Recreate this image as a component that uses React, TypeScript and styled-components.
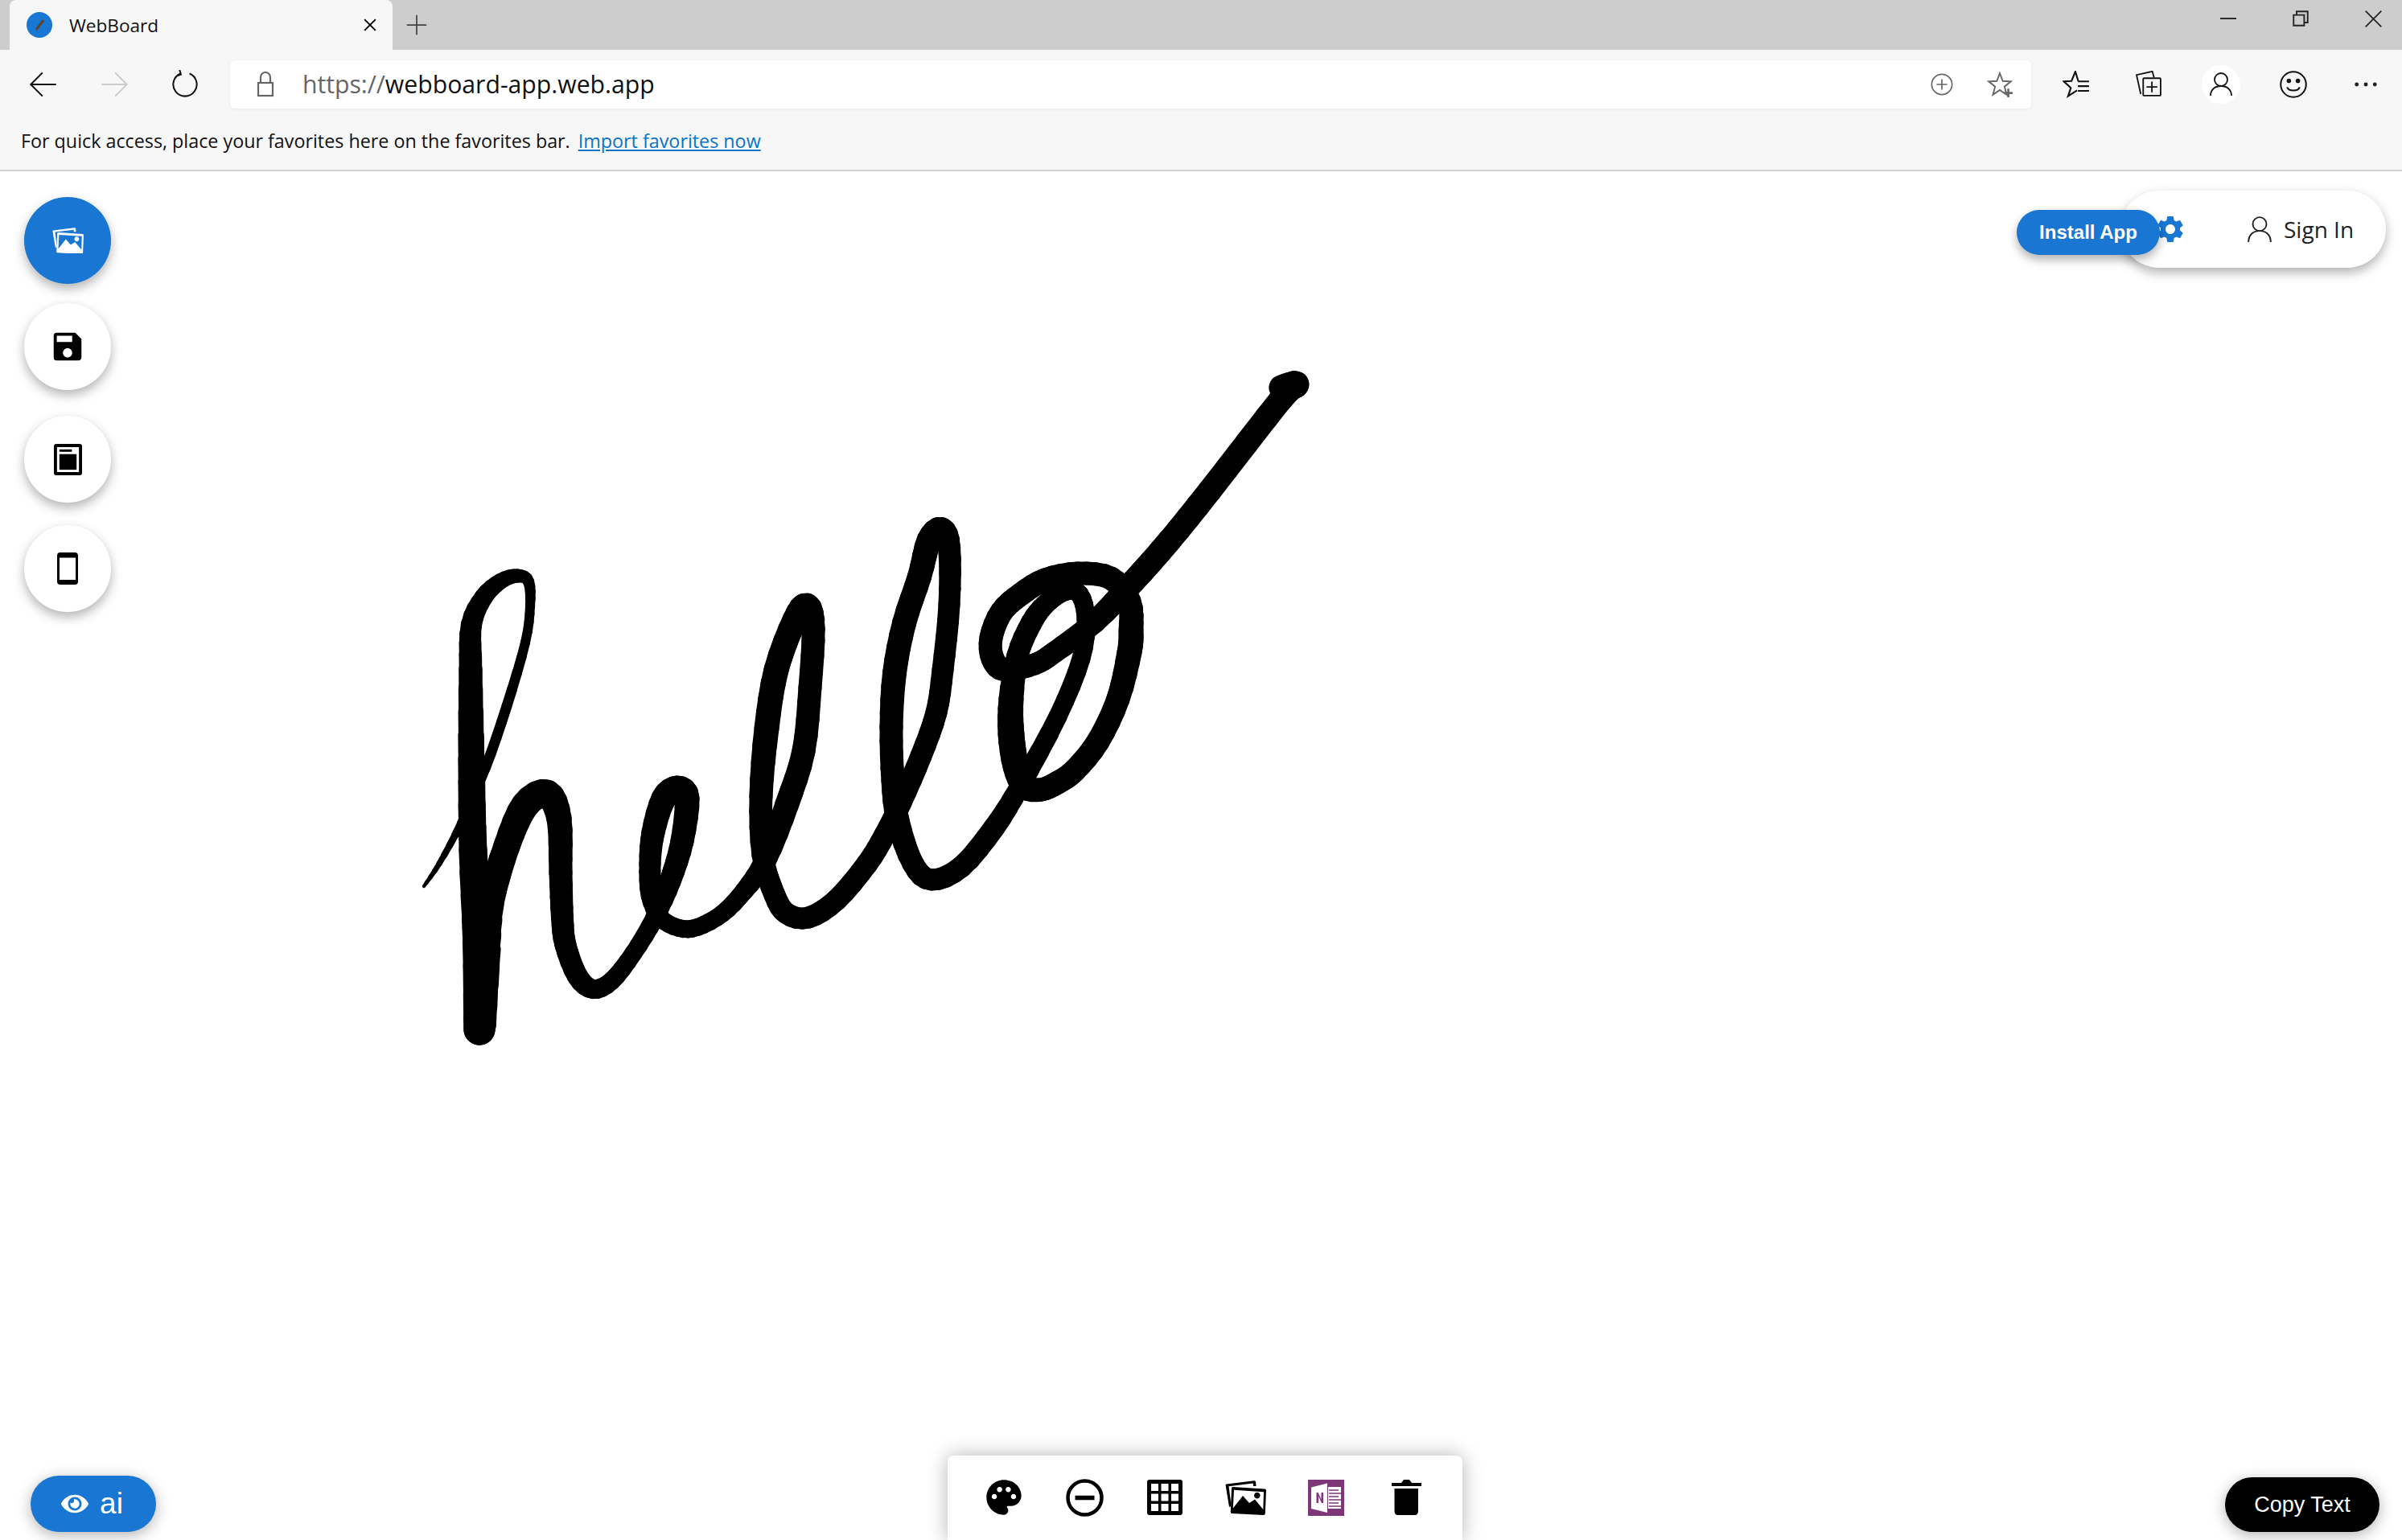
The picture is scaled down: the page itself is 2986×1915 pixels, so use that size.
import { createGlobalStyle, styled } from 'styled-components'
import { MdPalette, MdSave } from 'react-icons/md'
import { FaEye } from 'react-icons/fa'

type Pt = [number, number, number]

// hand trace of the "hello" stroke: x, y, pen width
const trace: Pt[] = [
  [527, 1102, 4], [546, 1074, 7], [573, 1024, 10], [603, 956, 13], [630, 878, 13], [653, 799, 12], [659, 754, 12],
  [657, 723, 14], [643, 716, 17], [622, 723, 20], [601, 743, 23], [586, 777, 26], [585, 833, 29], [586, 945, 33],
  [588, 1057, 35], [594, 1170, 38], [596, 1280, 39], [600, 1200, 43], [609, 1125, 34], [630, 1052, 33], [653, 1001, 35],
  [680, 987, 35], [695, 1018, 31], [697, 1085, 29], [699, 1141, 28], [703, 1175, 27], [718, 1214, 26], [737, 1230, 24],
  [760, 1220, 23], [787, 1186, 22], [814, 1141, 23], [833, 1096, 27], [848, 1046, 29], [854, 993, 31], [842, 981, 33],
  [825, 993, 31], [812, 1035, 29], [808, 1074, 27], [810, 1113, 27], [821, 1141, 22], [844, 1154, 22], [867, 1153, 22],
  [898, 1136, 22], [925, 1108, 23], [952, 1069, 27], [978, 1001, 30], [999, 934, 29], [1007, 855, 29], [1011, 782, 29],
  [1003, 754, 33], [988, 771, 31], [965, 833, 31], [953, 906, 31], [946, 990, 29], [948, 1063, 27], [963, 1113, 27],
  [978, 1136, 27], [1005, 1141, 27], [1040, 1119, 27], [1078, 1074, 27], [1100, 1038, 27], [1120, 998, 27], [1145, 940, 27],
  [1164, 886, 27], [1172, 833, 27], [1180, 752, 27], [1180, 681, 28], [1170, 659, 32], [1155, 672, 31], [1143, 717, 30],
  [1124, 775, 30], [1112, 837, 30], [1108, 904, 29], [1110, 971, 29], [1116, 1020, 29], [1135, 1074, 27], [1158, 1094, 27],
  [1195, 1078, 27], [1236, 1029, 27], [1269, 976, 25], [1315, 891, 23], [1344, 819, 23], [1350, 770, 23], [1342, 739, 23],
  [1323, 735, 25], [1299, 752, 25], [1282, 775, 27], [1265, 815, 27], [1257, 869, 31], [1257, 913, 33], [1263, 953, 33],
  [1274, 978, 31], [1294, 982, 29], [1315, 973, 29], [1336, 958, 29], [1365, 922, 29], [1390, 869, 29], [1404, 811, 31],
  [1406, 784, 31], [1404, 748, 29], [1381, 719, 29], [1340, 713, 29], [1299, 721, 29], [1269, 739, 29], [1245, 761, 29],
  [1232, 793, 29], [1234, 819, 29], [1249, 833, 29], [1286, 826, 27], [1311, 811, 27], [1361, 773, 28], [1409, 723, 30],
  [1454, 672, 30], [1504, 610, 30], [1592, 497, 30], [1611, 478, 33], [1593, 482, 31],
]

// catmull-rom between the traced points so the pen line doesn't look like a polygon
const smooth = (pts: Pt[], steps = 4): Pt[] => {
  const out: Pt[] = [pts[0]]
  for (let i = 0; i < pts.length - 1; i++) {
    const a = pts[Math.max(i - 1, 0)]
    const b = pts[i]
    const c = pts[i + 1]
    const d = pts[Math.min(i + 2, pts.length - 1)]
    for (let s = 1; s <= steps; s++) {
      const t = s / steps
      const at = (k: 0 | 1) =>
        0.5 *
        (2 * b[k] +
          (c[k] - a[k]) * t +
          (2 * a[k] - 5 * b[k] + 4 * c[k] - d[k]) * t * t +
          (3 * b[k] - a[k] - 3 * c[k] + d[k]) * t * t * t)
      out.push([at(0), at(1), b[2] + (c[2] - b[2]) * t])
    }
  }
  return out
}

const stroke = smooth(trace)

const GlobalStyle = createGlobalStyle`
  html, body {
    margin: 0;
    padding: 0;
    background: #fff;
    font-family: 'Open Sans', 'Liberation Sans', sans-serif;
  }
`

const Page = styled.div`
  width: 2986px;
  height: 1915px;
  display: flex;
  flex-direction: column;
  overflow: hidden;
`

const TabStrip = styled.div`
  height: 62px;
  background: #cdcdcd;
  display: flex;
  align-items: stretch;
  padding-left: 12px;
`

const Tab = styled.div`
  width: 476px;
  background: #f7f7f7;
  border-radius: 8px 8px 0 0;
  display: flex;
  align-items: center;
  padding: 0 18px 0 21px;
  box-sizing: border-box;
  font-size: 22.6px;
  color: #111;
`

const Favicon = styled.svg`
  width: 32px;
  height: 32px;
  margin-right: 21px;
`

const TabTitle = styled.span`
  flex: 1;
`

const NewTab = styled.div`
  width: 60px;
  display: flex;
  align-items: center;
  justify-content: center;
`

const WindowButtons = styled.div`
  margin-left: auto;
  display: flex;
  align-items: center;
  padding-right: 25px;
  gap: 70px;
  margin-top: -16px;
`

const NavBar = styled.div`
  height: 88px;
  background: #f7f7f7;
  display: flex;
  align-items: center;
  box-sizing: border-box;
  padding: 0 0 3px 36px;
`

const NavIcons = styled.div`
  display: flex;
  align-items: center;
  gap: 52px;
  width: 250px;
`

const AddressBar = styled.div`
  width: 2240px;
  height: 60px;
  background: #fff;
  border-radius: 6px;
  box-shadow: 0 1px 4px rgba(0, 0, 0, 0.06);
  display: flex;
  align-items: center;
  padding: 0 22px 0 28px;
  box-sizing: border-box;
  font-size: 30.2px;
  color: #111;
`

const Scheme = styled.span`
  color: #666;
`

const Url = styled.div`
  flex: 1;
  margin-left: 30px;
`

const AddressTools = styled.div`
  display: flex;
  align-items: center;
  gap: 40px;
`

const ToolIcons = styled.div`
  flex: 1;
  display: flex;
  align-items: center;
  padding-left: 11px;
`

const ToolCell = styled.div`
  width: 90px;
  display: flex;
  align-items: center;
  justify-content: center;
`

const ProfileBadge = styled.div`
  width: 48px;
  height: 48px;
  border-radius: 50%;
  background: #fff;
  display: flex;
  align-items: center;
  justify-content: center;
`

const FavBar = styled.div`
  height: 49px;
  background: #f7f7f7;
  border-bottom: 2px solid #d2d2d2;
  display: flex;
  align-items: center;
  gap: 10px;
  padding: 0 0 12px 26px;
  font-size: 23.3px;
  color: #111;
`

const FavLink = styled.a`
  color: #0a74c9;
  text-decoration: underline;
`

const Canvas = styled.main`
  position: relative;
  flex: 1;
  background: #fff;
`

const Drawing = styled.svg`
  position: absolute;
  left: 0;
  top: 0;
  width: 2986px;
  height: 1702px;
`

const FabColumn = styled.div`
  position: absolute;
  left: 30px;
  top: 32px;
  display: flex;
  flex-direction: column;
`

const Fab = styled.button<{ $active?: boolean; $top?: number }>`
  width: 108px;
  height: 108px;
  border: 0;
  padding: 0;
  margin-top: ${(p) => p.$top ?? 0}px;
  border-radius: 50%;
  background: ${(p) => (p.$active ? '#1976d2' : '#fff')};
  color: ${(p) => (p.$active ? '#fff' : '#000')};
  box-shadow: 0 6px 14px rgba(0, 0, 0, 0.3);
  display: flex;
  align-items: center;
  justify-content: center;
`

const AccountPill = styled.div`
  position: absolute;
  left: 2636px;
  top: 24px;
  width: 330px;
  height: 96px;
  border-radius: 48px;
  background: #fff;
  box-shadow: 0 6px 14px rgba(0, 0, 0, 0.3);
  display: flex;
  align-items: center;
  box-sizing: border-box;
  padding-left: 42px;
  font-size: 28px;
  color: #222;
`

const SignIn = styled.div`
  display: flex;
  align-items: center;
  gap: 13px;
  margin-left: 74px;
`

const InstallButton = styled.button`
  position: absolute;
  left: 2507px;
  top: 48px;
  width: 178px;
  height: 56px;
  border: 0;
  border-radius: 28px;
  background: #1976d2;
  color: #fff;
  font-family: 'Liberation Sans', sans-serif;
  font-weight: 700;
  font-size: 24px;
  box-shadow: 0 6px 12px rgba(0, 0, 0, 0.3);
`

const AiButton = styled.button`
  position: absolute;
  left: 38px;
  bottom: 10px;
  width: 156px;
  height: 70px;
  border: 0;
  border-radius: 35px;
  background: #1976d2;
  color: #fff;
  font-family: 'Liberation Sans', sans-serif;
  font-size: 37px;
  display: flex;
  align-items: center;
  justify-content: center;
  gap: 14px;
  padding: 0 3px 0 0;
  box-shadow: 0 4px 18px rgba(0, 0, 0, 0.3);
`

const CopyButton = styled.button`
  position: absolute;
  left: 2766px;
  bottom: 10px;
  width: 192px;
  height: 68px;
  border: 0;
  border-radius: 34px;
  background: #000;
  color: #fff;
  font-family: 'Liberation Sans', sans-serif;
  font-size: 27px;
  box-shadow: 0 4px 18px rgba(0, 0, 0, 0.3);
`

const BottomBar = styled.div`
  position: absolute;
  left: 1178px;
  bottom: 0;
  width: 640px;
  height: 105px;
  background: #fff;
  border-radius: 8px 8px 0 0;
  box-shadow: 0 0 24px rgba(0, 0, 0, 0.3);
  display: flex;
  align-items: flex-start;
  box-sizing: border-box;
  padding: 27px 0 0 20px;
`

const BarIcon = styled.div`
  width: 100px;
  height: 50px;
  display: flex;
  align-items: center;
  justify-content: center;
`

const LineIcon = ({ size = 34, color = '#111', children }: { size?: number; color?: string; children: React.ReactNode }) => (
  <svg width={size} height={size} viewBox="0 0 32 32" fill="none" stroke={color} strokeWidth="1.8">
    {children}
  </svg>
)

const Photos = ({ size, color }: { size: number; color: string }) => (
  <svg width={size} height={(size * 43) / 51} viewBox="0 0 51 43" fill={color} fillRule="evenodd">
    <path d="M1.5 4.5 L36 .3 Q38 .2 38.2 2 L38.5 7 L35 7 L34.8 3.6 L4.5 7.2 L7.5 30 L6.2 33 Q5 33 4.8 31.5 L.6 6 Q.4 4.7 1.5 4.5Z" />
    <path d="M9.5 8 L49 10.5 Q51 10.7 51 12.5 L49.8 41 Q49.7 43 47.5 43 L8.5 41 Q6.8 41 6.8 39 L8 9.8 Q8.2 8 9.5 8Z M11 11.8 L9.8 34.5 L22 19 L30 28 L37 23.5 L47.3 36 L48 14.2Z M39.8 14.8 a3.8 3.8 0 1 0 .01 0Z" />
  </svg>
)

const NewspaperIcon = () => (
  <svg width="35" height="39" viewBox="0 0 36 40" fill="#000" fillRule="evenodd">
    <path d="M3 0 H33 Q36 0 36 3 V37 Q36 40 33 40 H3 Q0 40 0 37 V3 Q0 0 3 0Z M4 4 V36 H32 V4Z" />
    <rect x="7" y="7" width="16" height="3" />
    <rect x="7" y="13" width="22" height="20" />
  </svg>
)

const TabletIcon = () => (
  <svg width="26" height="40" viewBox="0 0 26 40" fill="#000" fillRule="evenodd">
    <path d="M4 0 H22 Q26 0 26 4 V36 Q26 40 22 40 H4 Q0 40 0 36 V4 Q0 0 4 0Z M3 6.5 V34 H23 V6.5Z" />
  </svg>
)

const MinusCircle = () => (
  <svg width="47" height="47" viewBox="0 0 47 47" fill="none" stroke="#000">
    <circle cx="23.5" cy="23.5" r="21" strokeWidth="4.5" />
    <path d="M11.5 23.5 H35.5" strokeWidth="5.5" />
  </svg>
)

const GridIcon = () => (
  <svg width="44" height="44" viewBox="0 0 44 44" fill="#000" fillRule="evenodd">
    <path d="M3 0 H41 Q44 0 44 3 V41 Q44 44 41 44 H3 Q0 44 0 41 V3 Q0 0 3 0Z M5 5 V14 H14 V5Z M17.5 5 V14 H26.5 V5Z M30 5 V14 H39 V5Z M5 17.5 V26.5 H14 V17.5Z M17.5 17.5 V26.5 H26.5 V17.5Z M30 17.5 V26.5 H39 V17.5Z M5 30 V39 H14 V30Z M17.5 30 V39 H26.5 V30Z M30 30 V39 H39 V30Z" />
  </svg>
)

const OneNote = () => (
  <svg width="45" height="45" viewBox="0 0 45 45">
    <rect width="45" height="45" fill="#7d3678" />
    <path d="M25 9 H41 V36 H25Z" fill="#fff" />
    <path d="M4 9.5 L24 4.5 V41 L4 36Z" fill="#fff" />
    <path d="M10.5 16 V29 H13 V20.5 L17 29 H19 V16 H16.5 V24.5 L12.5 16Z" fill="#7d3678" />
    <path d="M26 13 H38 M26 17 H41 M26 21 H38 M26 25 H41 M26 29 H38 M26 33 H41" stroke="#7d3678" strokeWidth="1.6" />
  </svg>
)

const TrashIcon = () => (
  <svg width="37" height="45" viewBox="0 0 37 45" fill="#000">
    <path d="M0 4 H12 L15 0 H22 L25 4 H37 V8 H0Z" />
    <path d="M3.5 11 H33 V39 Q33 44 28.5 44 H8 Q3.5 44 3.5 39Z" />
  </svg>
)

const Gear = () => (
  <svg width="40" height="40" viewBox="0 0 24 24" fill="#1976d2">
    <path d="M19.14 12.94c.04-.3.06-.61.06-.94 0-.32-.02-.64-.07-.94l2.03-1.58a.49.49 0 0 0 .12-.61l-1.92-3.32a.488.488 0 0 0-.59-.22l-2.39.96c-.5-.38-1.03-.7-1.62-.94l-.36-2.54a.484.484 0 0 0-.48-.41h-3.84c-.24 0-.43.17-.47.41l-.36 2.54c-.59.24-1.13.57-1.62.94l-2.39-.96c-.22-.08-.47 0-.59.22L2.74 8.87c-.12.21-.08.47.12.61l2.03 1.58c-.05.3-.09.63-.09.94s.02.64.07.94l-2.03 1.58a.49.49 0 0 0-.12.61l1.92 3.32c.12.22.37.29.59.22l2.39-.96c.5.38 1.03.7 1.62.94l.36 2.54c.05.24.24.41.48.41h3.84c.24 0 .44-.17.47-.41l.36-2.54c.59-.24 1.13-.56 1.62-.94l2.39.96c.22.08.47 0 .59-.22l1.92-3.32c.12-.22.07-.47-.12-.61l-2.01-1.58zM12 15.6c-1.98 0-3.6-1.62-3.6-3.6s1.62-3.6 3.6-3.6 3.6 1.62 3.6 3.6-1.62 3.6-3.6 3.6z" />
  </svg>
)

export default function App() {
  return (
    <Page>
      <GlobalStyle />
      <TabStrip>
        <Tab>
          <Favicon viewBox="0 0 32 32">
            <circle cx="16" cy="16" r="16" fill="#1976d2" />
            <path d="M21 10 L12 22" stroke="#5a4632" strokeWidth="3" />
          </Favicon>
          <TabTitle>WebBoard</TabTitle>
          <LineIcon size={20} color="#000">
            <path d="M5 5 L27 27 M27 5 L5 27" strokeWidth="3" />
          </LineIcon>
        </Tab>
        <NewTab>
          <LineIcon size={28} color="#444">
            <path d="M16 2 V30 M2 16 H30" strokeWidth="2" />
          </LineIcon>
        </NewTab>
        <WindowButtons>
          <LineIcon size={20} color="#222">
            <path d="M0 16 H32" strokeWidth="3" />
          </LineIcon>
          <LineIcon size={20} color="#222">
            <path d="M2 9 H23 V30 H2Z M8 9 V2 H30 V24 H23" strokeWidth="3" />
          </LineIcon>
          <LineIcon size={21} color="#222">
            <path d="M1 1 L31 31 M31 1 L1 31" strokeWidth="2.6" />
          </LineIcon>
        </WindowButtons>
      </TabStrip>
      <NavBar>
        <NavIcons>
          <LineIcon size={36}>
            <path d="M30 16 H3 M15 3 L2 16 L15 29" />
          </LineIcon>
          <LineIcon size={36} color="#ccc">
            <path d="M2 16 H29 M17 3 L30 16 L17 29" />
          </LineIcon>
          <LineIcon size={36}>
            <path d="M11 4 A13 13 0 1 0 21 4 M10 0 L11.5 5 L6 7" />
          </LineIcon>
        </NavIcons>
        <AddressBar>
          <LineIcon size={32} color="#666">
            <rect x="7" y="14" width="18" height="16" strokeWidth="2.2" />
            <path d="M10 14 V7 A6 6 0 0 1 22 7 V14" strokeWidth="2.2" />
          </LineIcon>
          <Url>
            <Scheme>https://</Scheme>webboard-app.web.app
          </Url>
          <AddressTools>
            <LineIcon size={30} color="#666">
              <circle cx="16" cy="16" r="13.5" />
              <path d="M16 9 V23 M9 16 H23" />
            </LineIcon>
            <LineIcon size={34} color="#666">
              <path d="M16 3 L19.5 12 L29 12.5 L21.5 18.5 L24 28 L16 22.5 L8 28 L10.5 18.5 L3 12.5 L12.5 12Z" />
              <path d="M26 21 V31 M21 26 H31" strokeWidth="2.4" />
            </LineIcon>
          </AddressTools>
        </AddressBar>
        <ToolIcons>
          <ToolCell>
            <LineIcon size={34}>
              <path d="M18.4 12 L15 1 L10.5 12 L1.5 12.5 L9.7 20 L6.5 29.7 L17 23 M18 12.5 H31 M18 18 H31 M18 23.5 H31" strokeWidth="2" />
            </LineIcon>
          </ToolCell>
          <ToolCell>
            <LineIcon size={33}>
              <path d="M6 28 L1 5 L20 .8 L22 8" />
              <rect x="9" y="9" width="21" height="21" rx="1" />
              <path d="M19.5 13 V26 M13 19.5 H26" />
            </LineIcon>
          </ToolCell>
          <ToolCell>
            <ProfileBadge>
              <LineIcon size={32}>
                <circle cx="16" cy="10" r="8" />
                <path d="M3 30 C3 22 9 18 16 18 C23 18 29 22 29 30" />
              </LineIcon>
            </ProfileBadge>
          </ToolCell>
          <ToolCell>
            <LineIcon size={36}>
              <circle cx="16" cy="16" r="14" />
              <circle cx="11" cy="12" r="1.6" fill="#111" />
              <circle cx="21" cy="12" r="1.6" fill="#111" />
              <path d="M9 19 C11 24 21 24 23 19" />
            </LineIcon>
          </ToolCell>
          <ToolCell>
            <LineIcon size={30} color="#222">
              <circle cx="4" cy="16" r="1.7" fill="#222" />
              <circle cx="16" cy="16" r="1.7" fill="#222" />
              <circle cx="28" cy="16" r="1.7" fill="#222" />
            </LineIcon>
          </ToolCell>
        </ToolIcons>
      </NavBar>
      <FavBar>
        <span>For quick access, place your favorites here on the favorites bar.</span>
        <FavLink>Import favorites now</FavLink>
      </FavBar>
      <Canvas>
        <Drawing viewBox="0 213 2986 1702" fill="none" stroke="#000" strokeLinecap="round">
          {stroke.slice(1).map(([x, y, w], i) => (
            <line key={i} x1={stroke[i][0]} y1={stroke[i][1]} x2={x} y2={y} strokeWidth={(w + stroke[i][2]) / 2} />
          ))}
        </Drawing>
        <FabColumn>
          <Fab $active>
            <Photos size={39} color="#fff" />
          </Fab>
          <Fab $top={24}>
            <MdSave size={46} />
          </Fab>
          <Fab $top={32}>
            <NewspaperIcon />
          </Fab>
          <Fab $top={28}>
            <TabletIcon />
          </Fab>
        </FabColumn>
        <AccountPill>
          <Gear />
          <SignIn>
            <LineIcon size={34} color="#222">
              <circle cx="16" cy="10" r="8" />
              <path d="M3 31 C3 22 9 18 16 18 C23 18 29 22 29 31" />
            </LineIcon>
            Sign In
          </SignIn>
        </AccountPill>
        <InstallButton>Install App</InstallButton>
        <AiButton>
          <FaEye size={34} />
          ai
        </AiButton>
        <BottomBar>
          <BarIcon>
            <MdPalette size={52} />
          </BarIcon>
          <BarIcon>
            <MinusCircle />
          </BarIcon>
          <BarIcon>
            <GridIcon />
          </BarIcon>
          <BarIcon>
            <Photos size={51} color="#000" />
          </BarIcon>
          <BarIcon>
            <OneNote />
          </BarIcon>
          <BarIcon>
            <TrashIcon />
          </BarIcon>
        </BottomBar>
        <CopyButton>Copy Text</CopyButton>
      </Canvas>
    </Page>
  )
}
